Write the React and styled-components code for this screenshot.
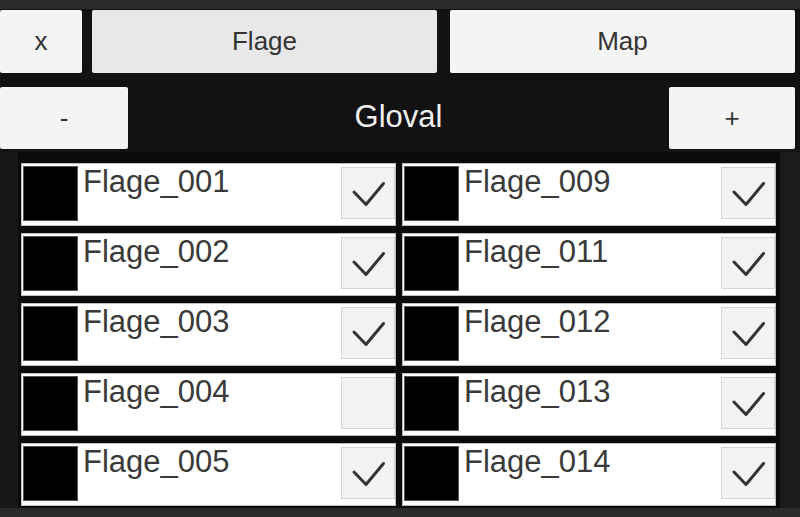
import React from 'react'
import styled, { createGlobalStyle } from 'styled-components'

const Global = createGlobalStyle`
  html, body {
    margin: 0;
    padding: 0;
    background: #121212;
    font-family: "Liberation Sans", Arial, sans-serif;
  }
  #root {
    width: 800px;
    height: 517px;
    overflow: hidden;
  }
`

const Window = styled.div`
  width: 800px;
  height: 517px;
  display: flex;
  flex-direction: column;
  background: #121212;
`

const TopStrip = styled.div`
  height: 9px;
  background: #2a2a2a;
  border-bottom: 1px solid #121212;
`

const TabRow = styled.div`
  display: flex;
  height: 63px;
  padding-right: 5px;
  gap: 13px;
`

const Button = styled.button`
  border: none;
  border-radius: 2px;
  background: ${p => (p.$active ? '#e8e8e8' : '#f4f4f4')};
  color: #333;
  font-family: inherit;
  font-size: 26px;
  padding: 0;
  flex: ${p => (p.$w ? `0 0 ${p.$w}px` : '1')};
  margin-right: ${p => (p.$gapAfter ? `${p.$gapAfter}px` : '0')};
  display: flex;
  align-items: center;
  justify-content: center;
`

const HeaderRow = styled.div`
  display: grid;
  grid-template-columns: 128px 1fr 126px;
  height: 62px;
  margin-top: 14px;
  padding-right: 5px;
`

const Title = styled.div`
  color: #f0f0f0;
  font-size: 31px;
  display: flex;
  align-items: center;
  justify-content: center;
  padding-bottom: 3px;
`

const ScrollArea = styled.div`
  margin-top: 3px;
  height: 356px;
  display: flex;
  background: #181818;
`

const ListGrid = styled.div`
  margin-left: 18px;
  width: 762px;
  box-sizing: border-box;
  padding: 11px 4px 0 3px;
  background: #0b0b0b;
  display: grid;
  grid-template-columns: 375px 374px;
  grid-template-rows: repeat(5, 63px);
  grid-auto-flow: column;
  column-gap: 6px;
  row-gap: 7px;
`

const Track = styled.div`
  flex: 1;
  background: #1b1b1b;
`

const Item = styled.div`
  box-sizing: border-box;
  height: 63px;
  border: 1px solid #bdbdbd;
  background: #fff;
  display: flex;
  align-items: flex-start;
`

const Swatch = styled.div`
  width: 55px;
  height: 55px;
  box-sizing: border-box;
  margin: 2px 0 0 1px;
  background: #000;
  border: 1px solid #555;
`

const Label = styled.div`
  flex: 1;
  margin: 2px 0 0 5px;
  font-size: 31px;
  line-height: 31px;
  color: #3a3a3a;
`

const Check = styled.div`
  width: 54px;
  height: 52px;
  box-sizing: border-box;
  margin-top: 3px;
  background: #f2f2f2;
  border: 1px solid #d6d6d6;
  svg { display: block; }
`

const BottomStrip = styled.div`
  height: 9px;
  background: #2a2a2a;
`

const flags = [
  ['Flage_001', true],
  ['Flage_002', true],
  ['Flage_003', true],
  ['Flage_004', false],
  ['Flage_005', true],
  ['Flage_009', true],
  ['Flage_011', true],
  ['Flage_012', true],
  ['Flage_013', true],
  ['Flage_014', true],
]

const FlagRow = ({ name, on }) => (
  <Item>
    <Swatch />
    <Label>{name}</Label>
    <Check>
      {on && (
        <svg width="52" height="50" viewBox="0 0 52 50">
          <path d="M12 24 L24 36.5 L41.5 15.5" fill="none" stroke="#333" strokeWidth="3" strokeLinecap="round" strokeLinejoin="round" />
        </svg>
      )}
    </Check>
  </Item>
)

export default function App() {
  return (
    <Window>
      <Global />
      <TopStrip />
      <TabRow>
        <Button $w={82} $gapAfter={-3}>x</Button>
        <Button $active>Flage</Button>
        <Button>Map</Button>
      </TabRow>
      <HeaderRow>
        <Button>-</Button>
        <Title>Gloval</Title>
        <Button>+</Button>
      </HeaderRow>
      <ScrollArea>
        <ListGrid>
          {flags.map(([name, on]) => (
            <FlagRow key={name} name={name} on={on} />
          ))}
        </ListGrid>
        <Track />
      </ScrollArea>
      <BottomStrip />
    </Window>
  )
}
